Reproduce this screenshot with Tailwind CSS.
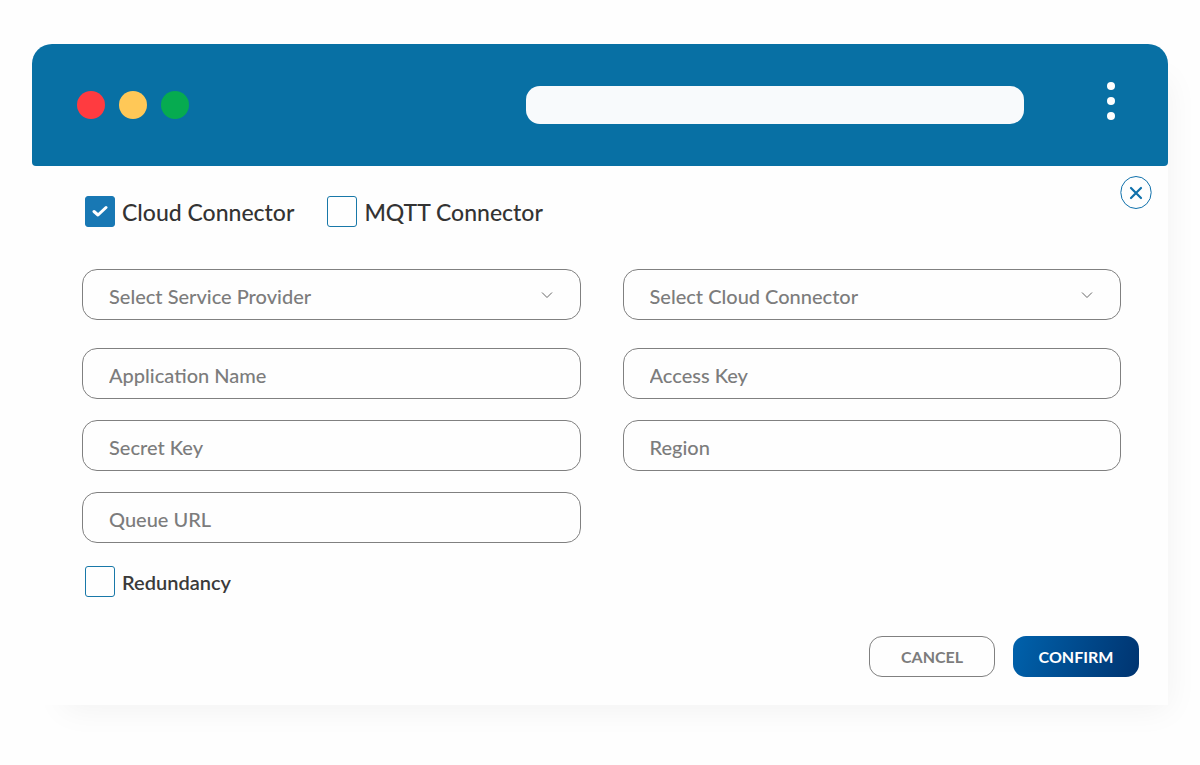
<!DOCTYPE html>
<html lang="en">
<head>
  <meta charset="UTF-8" />
  <meta name="viewport" content="width=device-width, initial-scale=1.0" />
  <title>Add Connector</title>
  <script src="https://cdn.jsdelivr.net/npm/@tailwindcss/browser@4"></script>
</head>
<body class="bg-[#fefefe] font-['Lato',sans-serif]">
  <main class="mx-8 mt-11 mb-15 rounded-t-[20px] bg-[#fefefe] shadow-[16px_20px_32px_-15px_rgba(0,0,0,0.05)]">
    <!-- Window bar -->
    <header class="flex items-center rounded-t-[20px] rounded-b-sm bg-[#0870a4] pl-[45px] pr-[53px] h-[122px]">
      <div class="flex gap-[14px]">
        <span class="size-7 rounded-full bg-[#ff3b40]"></span>
        <span class="size-7 rounded-full bg-[#ffc857]"></span>
        <span class="size-7 rounded-full bg-[#06ab50]"></span>
      </div>
      <input type="text" aria-label="Address" class="ml-auto mr-[83px] h-[38px] w-[48%] rounded-[14px] bg-[#f8fafc] px-4" />
      <button type="button" aria-label="Menu" class="-mt-2">
        <svg class="block" width="8" height="40" viewBox="0 0 8 40" fill="#fefefe">
          <circle cx="4" cy="5" r="4" />
          <circle cx="4" cy="20" r="4" />
          <circle cx="4" cy="35" r="4" />
        </svg>
      </button>
    </header>

    <form>
      <div class="flex justify-between pl-[53px] pr-4 pt-[10px]">
        <div class="flex items-start gap-[33px] pt-5 text-[23px] leading-7 font-medium text-[#333]">
          <label class="flex items-center gap-[7px]">
            <span class="relative">
              <input type="checkbox" name="cloud" checked class="peer block h-[31px] w-[30px] appearance-none rounded-[3px] border border-[#1878b4] checked:bg-[#1878b4]" />
              <svg class="pointer-events-none absolute left-[7px] top-[9px] hidden peer-checked:block" width="16" height="13" viewBox="0 0 16 13" fill="none" stroke="#fff" stroke-width="3" stroke-linecap="round" stroke-linejoin="round">
                <path d="M2 6.5 L6 10 L14 2.5" />
              </svg>
            </span>
            Cloud Connector
          </label>
          <label class="flex items-center gap-[7px]">
            <input type="checkbox" name="mqtt" class="h-[31px] w-[30px] appearance-none rounded-[3px] border border-[#1878a8] checked:bg-[#1878b4]" />
            MQTT Connector
          </label>
        </div>
        <button type="button" aria-label="Close">
          <svg class="mb-5 block" width="32" height="33" viewBox="0 0 32 33" fill="none" stroke="#0f70ab">
            <ellipse cx="16" cy="16.5" rx="15.2" ry="16" />
            <path d="M11 12 L21 22 M21 12 L11 22" stroke-width="2.2" stroke-linecap="round" />
          </svg>
        </button>
      </div>

      <div class="pl-[50px] pr-[47px] pt-10 text-xl font-medium text-[#7c7c7c]">
        <div class="grid grid-cols-2 gap-x-[42px]">
          <div class="relative">
            <select aria-label="Service provider" class="h-[51px] w-full appearance-none rounded-[15px] border border-[#808080] px-[26px] pt-0.5">
              <option>Select Service Provider</option>
            </select>
            <svg class="pointer-events-none absolute right-7 top-[22px]" width="12" height="8" viewBox="0 0 12 8" fill="none" stroke="#666">
              <path d="M1 1.5 L6 6.5 L11 1.5" />
            </svg>
          </div>
          <div class="relative">
            <select aria-label="Cloud connector" class="h-[51px] w-full appearance-none rounded-[15px] border border-[#808080] px-[26px] pt-0.5">
              <option>Select Cloud Connector</option>
            </select>
            <svg class="pointer-events-none absolute right-7 top-[22px]" width="12" height="8" viewBox="0 0 12 8" fill="none" stroke="#666">
              <path d="M1 1.5 L6 6.5 L11 1.5" />
            </svg>
          </div>
        </div>

        <div class="mt-7 grid grid-cols-2 gap-x-[42px] gap-y-[21px]">
          <input type="text" aria-label="Application Name" placeholder="Application Name" class="h-[51px] w-full rounded-[15px] border border-[#808080] px-[26px] pt-0.5 placeholder:text-[#7c7c7c]" />
          <input type="text" aria-label="Access Key" placeholder="Access Key" class="h-[51px] w-full rounded-[15px] border border-[#808080] px-[26px] pt-0.5 placeholder:text-[#7c7c7c]" />
          <input type="text" aria-label="Secret Key" placeholder="Secret Key" class="h-[51px] w-full rounded-[15px] border border-[#808080] px-[26px] pt-0.5 placeholder:text-[#7c7c7c]" />
          <input type="text" aria-label="Region" placeholder="Region" class="h-[51px] w-full rounded-[15px] border border-[#808080] px-[26px] pt-0.5 placeholder:text-[#7c7c7c]" />
          <input type="text" aria-label="Queue URL" placeholder="Queue URL" class="h-[51px] w-full rounded-[15px] border border-[#808080] px-[26px] pt-0.5 placeholder:text-[#7c7c7c]" />
        </div>
      </div>

      <div class="flex pl-[53px] pt-[23px]">
        <label class="flex items-center gap-[7px] text-xl font-semibold text-[#3a3a3a]">
          <input type="checkbox" name="redundancy" class="h-[31px] w-[30px] appearance-none rounded-[3px] border border-[#1878a8] checked:bg-[#1878b4]" />
          Redundancy
        </label>
      </div>

      <div class="flex justify-end gap-[18px] pb-7 pr-[29px] pt-[39px] text-base font-bold">
        <button type="button" class="h-[41px] w-[126px] rounded-[13px] border border-[#808080] text-[#7c7c7c]">CANCEL</button>
        <button type="submit" class="h-[41px] w-[126px] rounded-[13px] bg-linear-105 from-[#0062ac] to-[#003470] text-white">CONFIRM</button>
      </div>
    </form>
  </main>
</body>
</html>
